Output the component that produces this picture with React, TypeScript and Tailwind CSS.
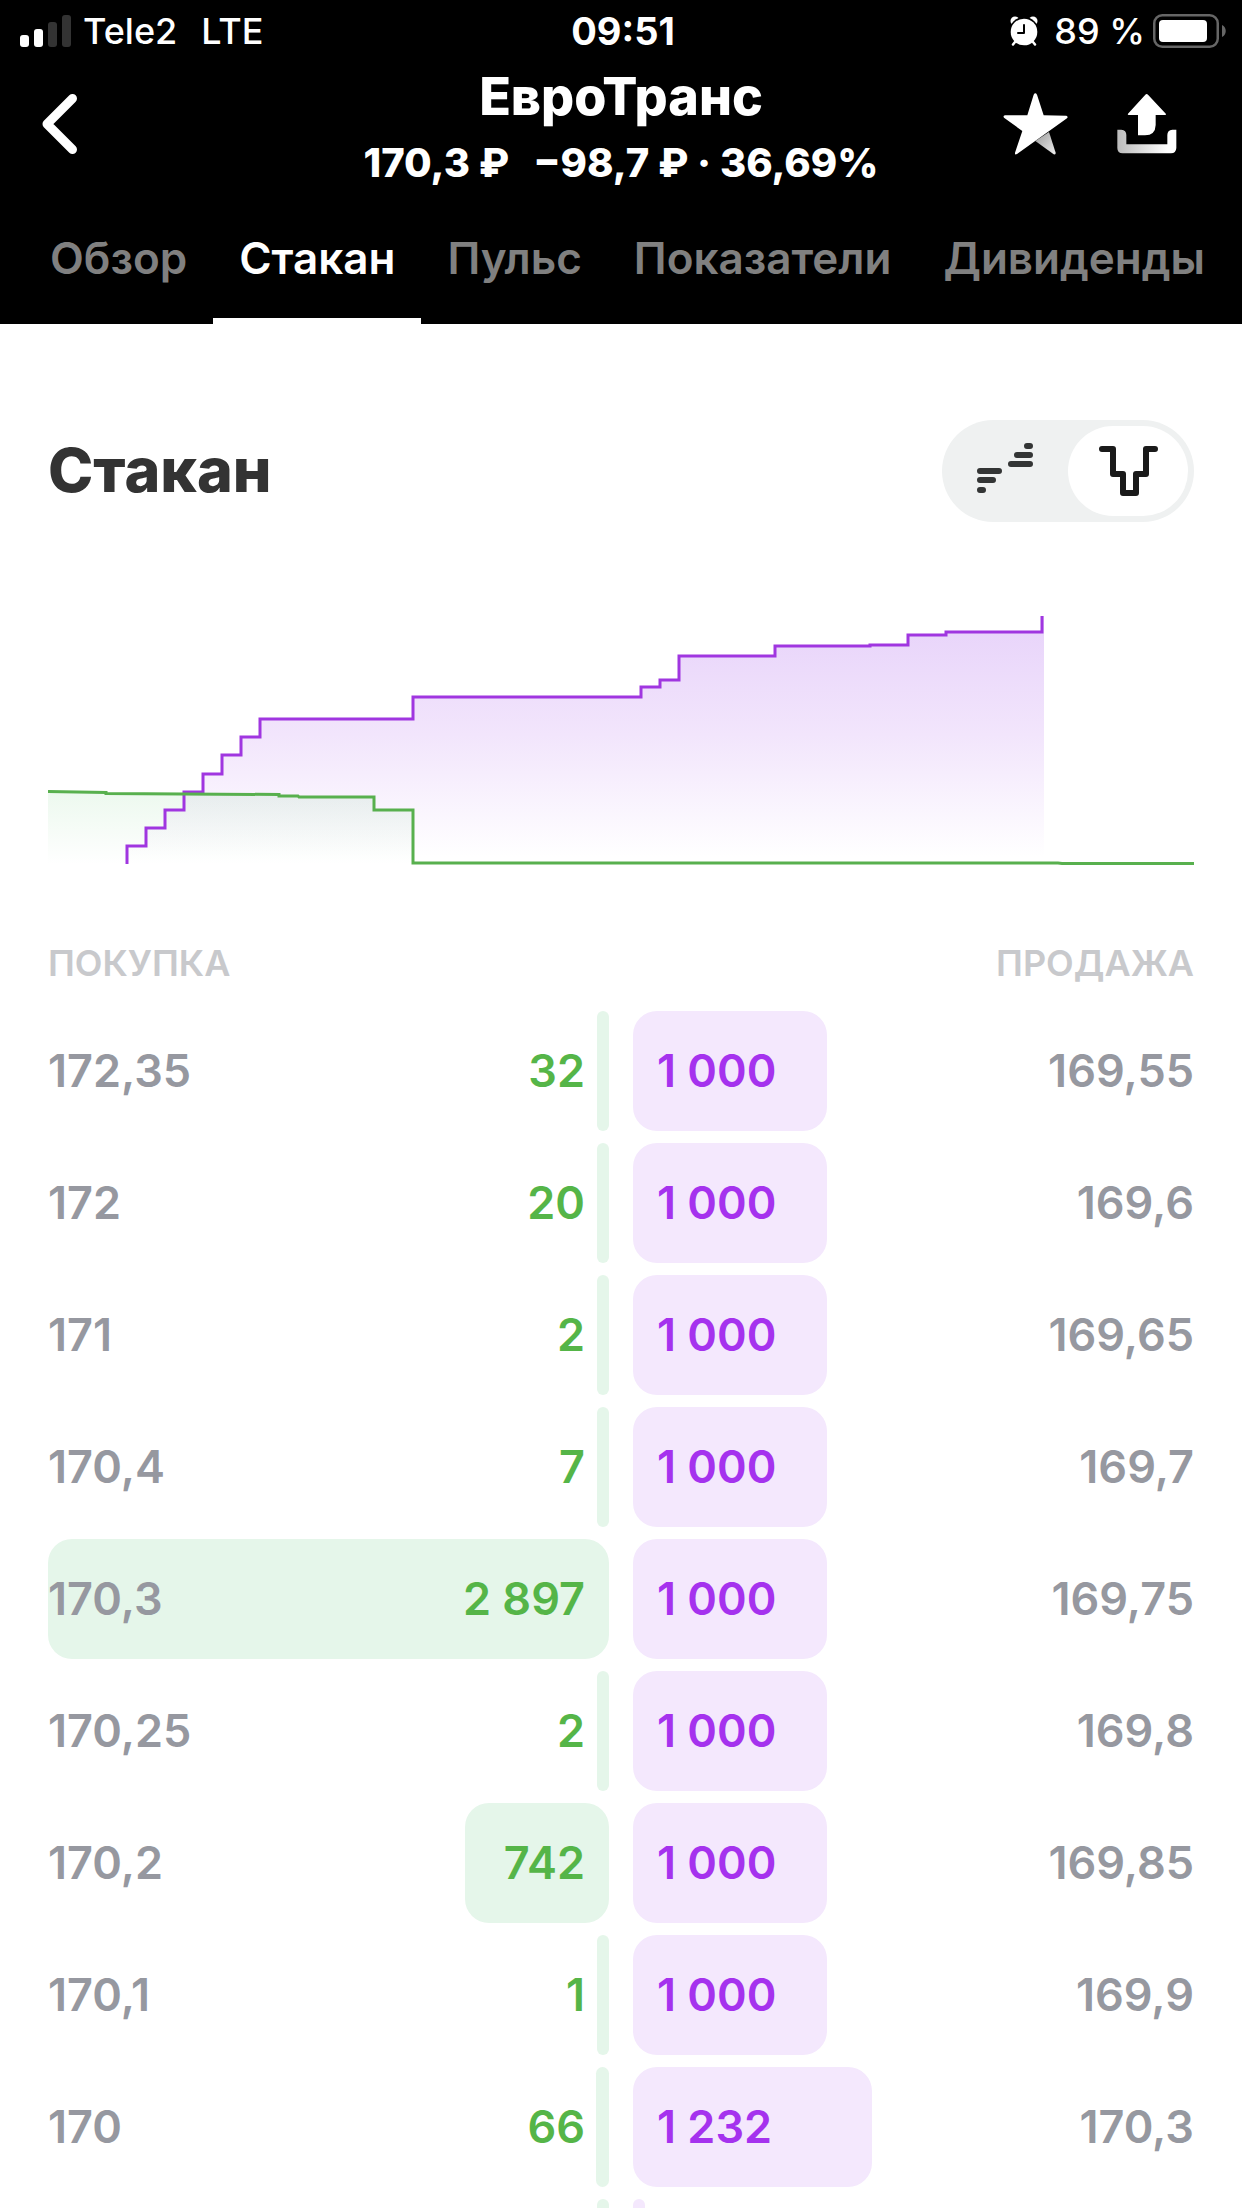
import { useState } from "react";
import clsx from "clsx";

const TABS = ["Обзор", "Стакан", "Пульс", "Показатели", "Дивиденды"];

type Level = { price: string; qty: number };

const BIDS: Level[] = [
    { price: "172,35", qty: 32 },
    { price: "172", qty: 20 },
    { price: "171", qty: 2 },
    { price: "170,4", qty: 7 },
    { price: "170,3", qty: 2897 },
    { price: "170,25", qty: 2 },
    { price: "170,2", qty: 742 },
    { price: "170,1", qty: 1 },
    { price: "170", qty: 66 },
    { price: "", qty: 0 },
];

const ASKS: Level[] = [
    { price: "169,55", qty: 1000 },
    { price: "169,6", qty: 1000 },
    { price: "169,65", qty: 1000 },
    { price: "169,7", qty: 1000 },
    { price: "169,75", qty: 1000 },
    { price: "169,8", qty: 1000 },
    { price: "169,85", qty: 1000 },
    { price: "169,9", qty: 1000 },
    { price: "170,3", qty: 1232 },
    { price: "", qty: 0 },
];

const MAX_QTY = Math.max(...BIDS.map((l) => l.qty), ...ASKS.map((l) => l.qty));

const formatQty = (qty: number) => (qty ? String(qty).replace(/\B(?=(\d{3})+$)/g, "\u00a0") : "");
const barWidth = (qty: number) => `${(qty / MAX_QTY) * 100}%`;

function StatusBar() {
    return (
        <div className="grid h-[62px] grid-cols-3 items-center pl-5 pr-4 text-[36px] font-medium">
            <div className="flex items-center">
                <svg className="h-8 w-[51px]" viewBox="0 0 51 32">
                    <rect x="0" y="20" width="9" height="12" rx="3" fill="#fff" />
                    <rect x="14" y="14" width="9" height="18" rx="3" fill="#fff" />
                    <rect x="28" y="7" width="9" height="25" rx="3" fill="#333" />
                    <rect x="42" y="0" width="9" height="32" rx="3" fill="#333" />
                </svg>
                <span className="ml-3">Tele2</span>
                <span className="ml-6">LTE</span>
            </div>
            <time className="text-center text-[38px] font-bold">09:51</time>
            <div className="flex items-center justify-end">
                <svg className="h-[30px] w-7" viewBox="0 0 28 30">
                    <circle cx="5" cy="5" r="4.5" fill="#fff" />
                    <circle cx="23" cy="5" r="4.5" fill="#fff" />
                    <circle cx="14" cy="16" r="15" fill="#000" />
                    <circle cx="14" cy="16" r="13.3" fill="#fff" />
                    <path d="M14 9v8H8" fill="none" stroke="#000" strokeWidth="2" strokeLinecap="round" strokeLinejoin="round" />
                    <path d="M5 26 3 28.5M23 26l2 2.5" stroke="#fff" strokeWidth="2.5" strokeLinecap="round" />
                </svg>
                <span className="ml-4">89 %</span>
                <svg className="ml-2 h-[34px] w-[73px]" viewBox="0 0 73 34">
                    <rect x="1.25" y="1.25" width="63.5" height="31.5" rx="8" fill="none" stroke="#666" strokeWidth="2.5" />
                    <rect x="6" y="6" width="48" height="22" rx="4" fill="#fff" />
                    <path d="M69 11c5 2 5 10 0 12z" fill="#666" />
                </svg>
            </div>
        </div>
    );
}

function Header() {
    const [tab, setTab] = useState("Стакан");

    return (
        <header className="bg-black text-white">
            <StatusBar />
            <div className="grid h-[132px] grid-cols-[1fr_auto_1fr] items-center">
                <div className="pb-2 pl-[42px]">
                    <button className="block" aria-label="Назад">
                        <svg className="h-[60px] w-9" viewBox="0 0 36 60" fill="none">
                            <path d="M30.5 4.5 5 30l25.5 25.5" stroke="#fff" strokeWidth="9" strokeLinecap="round" strokeLinejoin="round" />
                        </svg>
                    </button>
                </div>
                <div className="text-center font-extrabold">
                    <h1 className="text-[52px] leading-[70px]">ЕвроТранс</h1>
                    <p className="text-[40px] leading-[62px]">
                        <span>170,3 ₽</span>
                        <span className="ml-6">−98,7 ₽ · 36,69%</span>
                    </p>
                </div>
                <div className="flex items-center justify-end gap-12 pb-2 pr-[65px]">
                    <button className="block" aria-label="В избранное">
                        <svg className="h-[62px] w-[66px]" viewBox="370 281 196 186">
                            <defs>
                                <linearGradient id="starTail" x1="0" y1="0" x2="1" y2="1">
                                    <stop offset="0" stopColor="#999" />
                                    <stop offset="1" stopColor="#eee" />
                                </linearGradient>
                            </defs>
                            <path d="M466 425 507 398 527 460q1 7-6 5z" fill="url(#starTail)" />
                            <path d="M461 286q5-8 10 0l20 62 68 1q7 3 2 8L411 464q-7 4-6-4l22-65-55-40q-4-5 3-7l67 0z" fill="#fff" />
                        </svg>
                    </button>
                    <button className="block" aria-label="Поделиться">
                        <svg className="h-[60px] w-[60px]" viewBox="710 279 180 180">
                            <defs>
                                <linearGradient id="shareTray" x1="0" x2="1">
                                    <stop offset="0" stopColor="#bbb" />
                                    <stop offset="0.85" stopColor="#fff" />
                                </linearGradient>
                            </defs>
                            <path d="M795 281q4-4 8 0l54 58q1 3-3 3h-28v30q-1 31-32 31h-21v-61h-28q-4-1-2-4z" fill="#fff" />
                            <path d="M711 386h12q15 1 15 16v28h123v-28q0-15 15-16h12v55q-1 16-16 16H727q-16 0-16-16z" fill="url(#shareTray)" />
                        </svg>
                    </button>
                </div>
            </div>
            <nav className="flex overflow-hidden whitespace-nowrap pl-6 text-[44px] font-semibold">
                {TABS.map((name) => (
                    <button
                        key={name}
                        onClick={() => setTab(name)}
                        className={clsx(
                            "h-[130px] border-b-6 px-[26px] pt-1",
                            name === tab ? "border-white text-white" : "border-transparent text-[#808080]"
                        )}
                    >
                        {name}
                    </button>
                ))}
            </nav>
        </header>
    );
}

function ViewToggle() {
    return (
        <div className="flex rounded-full bg-[#eff1f1] p-[6px]">
            <button className="flex h-[90px] w-[120px] items-center justify-center pb-1.5 pr-1.5" aria-label="Лесенка">
                <svg className="h-[52px] w-[58px]" viewBox="0 0 58 52" stroke="#333535" strokeWidth="6" strokeLinecap="round">
                    <path d="M51 4h3M41 13h13M35 22h19M4 29h19M4 38h13M4 48h3" />
                </svg>
            </button>
            <button className="flex h-[90px] w-[120px] items-center justify-center rounded-full bg-white" aria-label="Стакан">
                <svg className="h-[50px] w-[60px]" viewBox="0 0 60 50" fill="none" stroke="#1a1a1a" strokeWidth="6" strokeLinecap="round" strokeLinejoin="round">
                    <path d="M4 3h11v25h10v19h13V28h10V3h9" />
                </svg>
            </button>
        </div>
    );
}

function DepthChart() {
    const ask =
        "M79 252V234H98V216H117V198H136V180H155V162H174V143H193V125H212V107H365V85H593V75H612V68H631V44H727V34H822V33H860V23H898V20H994V4";
    const bid = "M0 179.5 58 180.5V181.5L135 182 231 182.5V184H250L251 185H326V198H365V251H1010L1014 251.5H1146";

    return (
        <svg className="mt-[90px] block w-full overflow-visible" viewBox="0 0 1146 252" fill="none">
            <defs>
                <linearGradient id="askFill" gradientUnits="userSpaceOnUse" x1="0" y1="0" x2="0" y2="245">
                    <stop offset="0" stopColor="#e7d2fa" />
                    <stop offset="0.5" stopColor="#f2e5fc" />
                    <stop offset="1" stopColor="#fff" />
                </linearGradient>
                <linearGradient id="bidFill" gradientUnits="userSpaceOnUse" x1="0" y1="180" x2="0" y2="252">
                    <stop offset="0" stopColor="#57c468" stopOpacity="0.11" />
                    <stop offset="1" stopColor="#57c468" stopOpacity="0" />
                </linearGradient>
            </defs>
            <path d={ask + "H996V252Z"} fill="url(#askFill)" />
            <path d={bid + "V252H0Z"} fill="url(#bidFill)" />
            <path d={ask} stroke="#a036e0" strokeWidth="3" />
            <path d={bid} stroke="#58b04e" strokeWidth="3" />
        </svg>
    );
}

function OrderBook() {
    return (
        <table className="mt-[75px] block">
            <thead className="block">
                <tr className="flex h-12 items-center justify-between text-[36px] text-[#c8c9cc]">
                    <th className="font-semibold">ПОКУПКА</th>
                    <th className="font-semibold">ПРОДАЖА</th>
                </tr>
            </thead>
            <tbody className="mt-6 grid gap-3 text-[45px] font-semibold">
                {BIDS.map((bid, i) => (
                    <tr key={i} className="grid h-[120px] grid-cols-2 gap-6">
                        <td className="relative flex items-center justify-between pr-6">
                            <span
                                className="absolute inset-y-0 right-0 min-w-3 rounded-3xl bg-[#e5f6ea]"
                                style={{ width: barWidth(bid.qty) }}
                            />
                            <span className="relative text-[#9698a0]">{bid.price}</span>
                            <span className="relative text-[#55b548]">{formatQty(bid.qty)}</span>
                        </td>
                        <td className="relative flex items-center justify-between pl-6">
                            <span
                                className="absolute inset-y-0 left-0 min-w-3 rounded-3xl bg-[#f4e8fd]"
                                style={{ width: barWidth(ASKS[i].qty) }}
                            />
                            <span className="relative text-[#a532ee]">{formatQty(ASKS[i].qty)}</span>
                            <span className="relative text-[#9698a0]">{ASKS[i].price}</span>
                        </td>
                    </tr>
                ))}
            </tbody>
        </table>
    );
}

export default function App() {
    return (
        <div className="flex h-screen flex-col overflow-hidden bg-white font-['Inter',sans-serif]">
            <Header />
            <main className="px-12 pt-24">
                <div className="flex items-center justify-between">
                    <h2 className="text-[61px] font-extrabold text-[#333]">Стакан</h2>
                    <ViewToggle />
                </div>
                <DepthChart />
                <OrderBook />
            </main>
        </div>
    );
}
